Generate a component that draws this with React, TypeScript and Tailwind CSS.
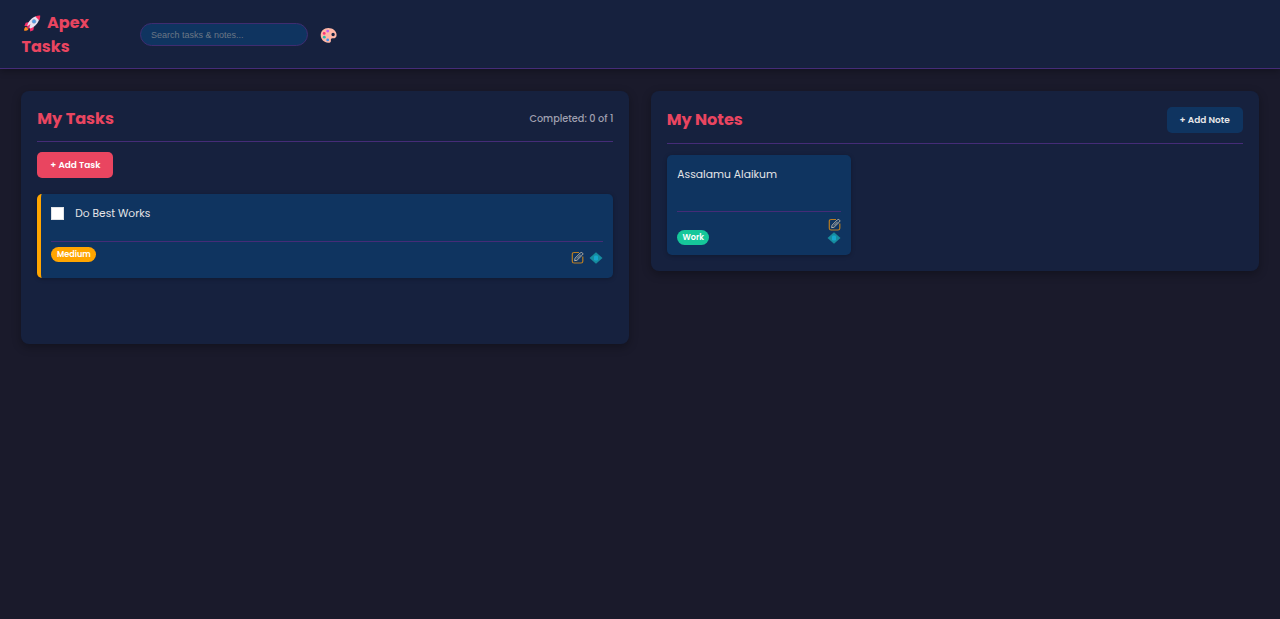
import React from "react";

function RocketIcon() {
  return (
    <svg className="block h-[19px] w-[18px]" viewBox="0 0 18 19">
      <path d="M6.5 8 2.7 8.8 1.4 12l4 .2zM11 12.3l-.6 4-3.2 1.3-.3-4z" fill="#f8316f" />
      <path d="M3 12.7c-1.8.8-2 3-1.8 4.1 1.4.1 3.7-.2 4.3-1.9z" fill="#ff8a1d" />
      <path d="M4.3 11.8C5.3 7.4 9 3.2 13.2 2.3l3 3C15.2 9.4 11.2 13.5 6.9 14.6z" fill="#e8e2f0" />
      <path d="M12.4 2.5c1.5-.8 3.2-1 4.8-.9.1 1.6-.2 3.4-1 4.9z" fill="#f92f60" />
      <path d="m4.4 12.2 3-2.2-1.2 4.6-2.2-.1z" fill="#e62c65" />
      <circle cx="11" cy="7.4" r="1.9" fill="#4b9be8" stroke="#8b9dbb" strokeWidth=".6" />
    </svg>
  );
}

function PaletteIcon() {
  return (
    <svg className="block size-[17px]" viewBox="0 0 17 17">
      <path
        fillRule="evenodd"
        d="M8.3.9C4 .9.7 4 .7 8c0 4.4 3.3 7.4 7.4 7.8 1.8.2 3.1-.8 2.8-2.3-.2-1.4.2-2.2 1.7-2.2 2.4.2 4-.9 4-3.4C16.6 3.7 12.7.9 8.3.9Zm4.8 4.9a1.7 1.7 0 1 1 0 3.4 1.7 1.7 0 0 1 0-3.4Z"
        fill="#ffb7a6"
      />
      <circle cx="7.7" cy="4.1" r="1.4" fill="#c35cf0" />
      <circle cx="4.2" cy="6.4" r="1.4" fill="#f93577" />
      <circle cx="4.3" cy="10.2" r="1.4" fill="#25b9ac" />
      <circle cx="7.7" cy="12.9" r="1.4" fill="#3b91f4" />
    </svg>
  );
}

function EditIcon() {
  return (
    <svg className="block size-[13px]" viewBox="0 0 13 13" fill="none">
      <path d="M8 1.5H3.1Q1.3 1.5 1.3 3.3v6.9Q1.3 12 3.1 12H10q1.8 0 1.8-1.8V5.5" stroke="#b97d22" strokeWidth="1.2" />
      <path d="m4.1 7.2 5.2-5.3c1.4-1.4 3.5.7 2.1 2.1L6.1 9.2l-2.5.5zM6 7.5l3.8-3.8" stroke="#b5b1a8" strokeWidth="1" strokeLinejoin="round" />
    </svg>
  );
}

function DiamondIcon() {
  return (
    <svg className="block h-[12px] w-[14px]" viewBox="0 0 14 12">
      <path d="M7 .3 13.5 6 7 11.7 .5 6Z" fill="#178c9e" />
      <rect x="5" y="3.5" width="4" height="5" rx="1.3" fill="#16a7cc" />
    </svg>
  );
}

export default function App() {
  return (
    <div className="min-h-screen bg-[#1a1a2b] font-[Poppins,Inter,sans-serif] text-[#e6e6e8]">
      <header className="flex h-[69px] items-center border-b border-[#452c78] bg-[#16213e] pt-px pl-[21.5px] shadow-[0_2px_7px_rgba(0,0,0,0.3)]">
        <h1 className="w-[118px] pt-px text-[16px] leading-[24px] font-bold text-[#e94560]">
          <span className="flex h-[23px] items-center"><span className="ml-[1.5px]"><RocketIcon /></span><span className="ml-[6px]">Apex</span></span>
          <span className="block">Tasks</span>
        </h1>
        <input
          aria-label="Search"
          placeholder="Search tasks & notes..."
          className="h-[23px] w-[168px] rounded-full border border-[#3f2c70] bg-[#0f3460] px-[10.5px] font-['Liberation_Sans',sans-serif] text-[9px] text-white outline-none placeholder:text-[#6b7785]"
        />
        <button aria-label="Theme" className="mt-[2px] ml-[12.5px]"><PaletteIcon /></button>
      </header>

      <main className="grid grid-cols-2 items-start gap-[21.33px] px-[21.33px] pt-[22px]">
        <section className="h-[253px] rounded-[8px] bg-[#16213e] px-[16px] pt-[16px] shadow-[0_3px_10px_rgba(0,0,0,0.3)]">
          <div className="flex h-[35px] items-start justify-between border-b border-[#452c78]">
            <h2 className="text-[16.1px] leading-[24px] font-bold text-[#e94560]">My Tasks</h2>
            <span className="text-[9.7px] leading-[23px] font-medium text-[#a0a0b0]">Completed: 0 of 1</span>
          </div>
          <button className="mt-[10px] flex h-[26px] w-[76px] items-center justify-center rounded-[5px] bg-[#e94560] pt-px text-[8.96px] font-semibold whitespace-nowrap text-white">+ Add Task</button>
          <article className="mt-[16px] h-[84px] rounded-[5px] border-l-4 border-[#ffa500] bg-[#0f3460] pr-[10.67px] pl-[10px] shadow-[0_1px_4px_rgba(0,0,0,0.25)]">
            <div className="flex h-[48px] items-start border-b border-[#452c78] pt-[12px]">
              <span className="mt-px size-[13px] border border-[#dfe3e6] bg-white" />
              <span className="ml-[11px] text-[10.67px] leading-[16px]">Do Best Works</span>
            </div>
            <div className="flex items-start justify-between">
              <span className="mt-[5px] flex h-[15px] w-[45px] items-center justify-center rounded-full bg-[#ffa500] text-[8.1px] font-semibold text-white">Medium</span>
              <span className="mt-[9px] flex items-center gap-[5px]"><EditIcon /><DiamondIcon /></span>
            </div>
          </article>
        </section>

        <section className="h-[180px] rounded-[8px] bg-[#16213e] px-[16px] pt-[16px] shadow-[0_3px_10px_rgba(0,0,0,0.3)]">
          <div className="flex h-[37px] items-start justify-between border-b border-[#452c78]">
            <h2 className="text-[16.1px] leading-[26px] font-bold text-[#e94560]">My Notes</h2>
            <button className="flex h-[26px] w-[76px] items-center justify-center rounded-[5px] bg-[#0f3460] pt-px text-[8.96px] font-semibold whitespace-nowrap text-[#e6e6e8]">+ Add Note</button>
          </div>
          <article className="mt-[11px] h-[100px] w-[184.5px] rounded-[5px] bg-[#0f3460] pr-[10px] pl-[10.67px] shadow-[0_1px_4px_rgba(0,0,0,0.25)]">
            <div className="h-[57px] border-b border-[#452c78] pt-[11px] text-[10.75px] leading-[17px]">Assalamu Alaikum</div>
            <div className="flex items-start justify-between">
              <span className="mt-[18px] flex h-[15px] w-[32px] items-center justify-center rounded-full bg-[#16c79a] text-[8.1px] font-semibold text-white">Work</span>
              <span className="mt-[6px] flex flex-col items-center gap-px"><EditIcon /><DiamondIcon /></span>
            </div>
          </article>
        </section>
      </main>
    </div>
  );
}
